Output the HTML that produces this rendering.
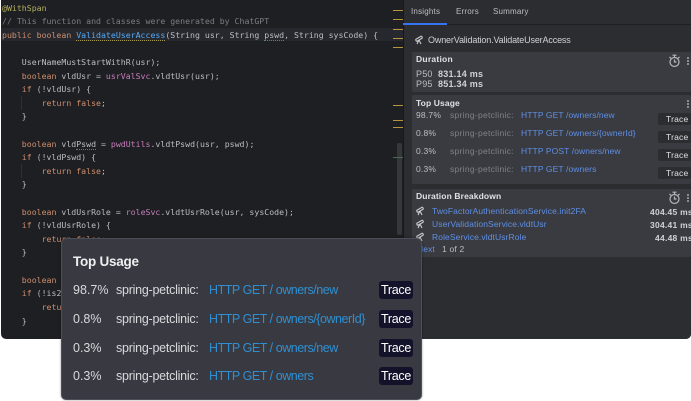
<!DOCTYPE html>
<html><head><meta charset="utf-8"><style>
html,body{margin:0;padding:0;background:#fff}
body{position:relative;width:691px;height:401px;overflow:hidden;font-family:"Liberation Sans",sans-serif}
#win{position:absolute;left:1px;top:0;width:690px;height:339px;background:#1e1f22;border-radius:0 0 5px 5px;overflow:hidden;filter:blur(.35px)}
.c{position:absolute;left:1px;font:8.22px/13px "DejaVu Sans Mono",monospace;color:#bcbec4;white-space:pre}
.k{color:#cf8e6d}.f{color:#c77dbb}
.a{position:absolute;white-space:nowrap;line-height:12px}
.b{position:absolute}
.card{position:absolute;left:412px;width:279px;background:#393b40;border-radius:2px}
.t{font-size:8.5px;color:#dfe1e5;font-weight:bold;letter-spacing:.12px}
.n{font-size:8.5px;color:#bcbec4;letter-spacing:.2px}
.g{font-size:8.5px;color:#7f828a;letter-spacing:.28px}
.l{font-size:8.5px;color:#5f8fe6;letter-spacing:.1px}
.tr{position:absolute;left:658px;width:33px;height:12px;background:#2b2d30;border-radius:2px;color:#dfe1e5;font-size:8.5px;line-height:12px;padding-left:8px;box-sizing:border-box;letter-spacing:.2px}
.y{position:absolute;left:392px;width:10px;height:1px;background:#b8963e}
#pop{position:absolute;left:61px;top:238px;width:361px;height:162px;background:#393a41;border:1px solid #4c4f59;border-radius:5px;box-sizing:border-box;box-shadow:0 0 2px rgba(0,0,0,.4);filter:blur(.2px)}
.p{position:absolute;font-size:12.5px;line-height:16px;color:#d8d9dc;white-space:nowrap}
.s{letter-spacing:-.25px}
.pl{color:#2f8fd2;letter-spacing:-.46px}
.pt{position:absolute;left:317px;width:34px;height:18px;background:#13122b;border-radius:3px;color:#fff;font-size:12.5px;line-height:19px;text-align:center;letter-spacing:-.3px}
</style></head><body>
<div id="win">
<div class="b" style="left:0;top:28px;width:402px;height:13px;background:#26282e"></div>
<div class="c" style="top:2px;color:#b3ae60">@WithSpan</div>
<div class="c" style="top:15px;color:#7a7e85">// This function and classes were generated by ChatGPT</div>
<div class="c" style="top:29px"><span class="k">public boolean</span> <span style="color:#56a8f5;border-bottom:1px dotted #a89a4a">ValidateUserAccess</span>(String usr, String <span style="border-bottom:1px dotted #5a8a5a">pswd</span>, String sysCode) {</div>
<div class="c" style="top:56px">    UserNameMustStartWithR(usr);</div>
<div class="c" style="top:70px">    <span class="k">boolean</span> vldUsr = <span class="f">usrValSvc</span>.vldtUsr(usr);</div>
<div class="c" style="top:83px">    <span class="k">if</span> (!vldUsr) {</div>
<div class="c" style="top:97px">        <span class="k">return false</span>;</div>
<div class="c" style="top:110px">    }</div>
<div class="c" style="top:138px">    <span class="k">boolean</span> vld<span style="border-bottom:1px dotted #5a8a5a">Pswd</span> = <span class="f">pwdUtils</span>.vldtPswd(usr, pswd);</div>
<div class="c" style="top:151px">    <span class="k">if</span> (!vldPswd) {</div>
<div class="c" style="top:165px">        <span class="k">return false</span>;</div>
<div class="c" style="top:178px">    }</div>
<div class="c" style="top:206px">    <span class="k">boolean</span> vldUsrRole = <span class="f">roleSvc</span>.vldtUsrRole(usr, sysCode);</div>
<div class="c" style="top:219px">    <span class="k">if</span> (!vldUsrRole) {</div>
<div class="c" style="top:233px">        <span class="k">return false</span>;</div>
<div class="c" style="top:246px">    }</div>
<div class="c" style="top:274px">    <span class="k">boolean</span> is2FA = true;</div>
<div class="c" style="top:287px">    <span class="k">if</span> (!is2FA) {</div>
<div class="c" style="top:301px">        <span class="k">return false</span>;</div>
<div class="c" style="top:315px">    }</div>
<div class="b" style="left:20px;top:96px;width:1px;height:14px;background:#2e3035"></div>
<div class="b" style="left:20px;top:164px;width:1px;height:14px;background:#2e3035"></div>
<div class="b" style="left:396px;top:143px;width:5px;height:92px;background:#35373b;border-radius:2px"></div>
<div class="y" style="top:10px"></div><div class="y" style="top:19px"></div><div class="y" style="top:29px"></div><div class="y" style="top:38px"></div><div class="y" style="top:47px"></div><div class="y" style="top:105px"></div><div class="y" style="top:120px"></div><div class="y" style="top:127px"></div>
<div class="y" style="top:157px;background:#4a6a55"></div>
<div class="b" style="left:402px;top:0;width:288px;height:339px;background:#2b2d30;border-left:1px solid #17181a;box-sizing:border-box"></div>
</div>

<div id="right" style="position:absolute;left:0;top:0;width:691px;height:339px;overflow:hidden;filter:blur(.3px)">
<div class="b" style="left:403px;top:24px;width:288px;height:1px;background:#1e1f22"></div>
<div class="b" style="left:403px;top:23px;width:44px;height:2px;background:#3574f0"></div>
<div class="a n" style="left:411px;top:6px;font-size:8px">Insights</div>
<div class="a n" style="left:456px;top:6px;font-size:8px">Errors</div>
<div class="a n" style="left:493px;top:6px;font-size:8px">Summary</div>
<svg class="b" style="left:414px;top:35px" width="10" height="10" viewBox="0 0 10 10" fill="none" stroke="#c8cad0" stroke-width="1.1"><path d="M1.5 4.5L7.5 1M2.5 6.5L8.5 3M1.5 4.5L2.5 6.5M7.5 1L8.5 3M5 5L3 9M5 5L7 9"/></svg>
<div class="a" style="left:428px;top:34px;font-size:9px;color:#cfd1d6;letter-spacing:-.15px">OwnerValidation.ValidateUserAccess</div>

<div class="card" style="top:52px;height:40px"></div>
<div class="a t" style="left:416px;top:53px;letter-spacing:.25px">Duration</div>
<div class="a n" style="left:416px;top:68px;font-size:9px">P50</div><div class="a t" style="left:438px;top:68px;font-size:9px;color:#cfd1d6;letter-spacing:.25px">831.14 ms</div>
<div class="a n" style="left:416px;top:78px;font-size:9px">P95</div><div class="a t" style="left:438px;top:78px;font-size:9px;color:#cfd1d6;letter-spacing:.25px">851.34 ms</div>
<svg class="b" style="left:668px;top:54px" width="13" height="14" viewBox="0 0 13 14" fill="none" stroke="#b4b6bc" stroke-width="1.2"><circle cx="6.5" cy="8" r="4.5"/><path d="M4.5 1.2H8.5M6.5 1.2V3.5M6.5 5.5V8H8.5M1.5 3L3 4.3M11.5 3L10 4.3"/></svg>
<div class="b" style="left:687px;top:57px;width:2px;height:2px;background:#8a8c92;box-shadow:0 3px #8a8c92,0 6px #8a8c92"></div>

<div class="card" style="top:95px;height:89px"></div>
<div class="a t" style="left:416px;top:97px">Top Usage</div>
<div class="b" style="left:687px;top:100px;width:2px;height:2px;background:#8a8c92;box-shadow:0 3px #8a8c92,0 6px #8a8c92"></div>
<div class="a n" style="left:416px;top:109px">98.7%</div><div class="a g" style="left:450px;top:109px">spring-petclinic:</div><div class="a l" style="left:521px;top:109px">HTTP GET /owners/new</div>
<div class="a n" style="left:416px;top:127px">0.8%</div><div class="a g" style="left:450px;top:127px">spring-petclinic:</div><div class="a l" style="left:521px;top:127px">HTTP GET /owners/{ownerId}</div>
<div class="a n" style="left:416px;top:145px">0.3%</div><div class="a g" style="left:450px;top:145px">spring-petclinic:</div><div class="a l" style="left:521px;top:145px">HTTP POST /owners/new</div>
<div class="a n" style="left:416px;top:163px">0.3%</div><div class="a g" style="left:450px;top:163px">spring-petclinic:</div><div class="a l" style="left:521px;top:163px">HTTP GET /owners</div>
<div class="tr" style="top:113px">Trace</div><div class="tr" style="top:131px">Trace</div><div class="tr" style="top:149px">Trace</div><div class="tr" style="top:167px">Trace</div>

<div class="card" style="top:189px;height:68px"></div>
<div class="a t" style="left:416px;top:190px">Duration Breakdown</div>
<svg class="b" style="left:668px;top:191px" width="13" height="14" viewBox="0 0 13 14" fill="none" stroke="#b4b6bc" stroke-width="1.2"><circle cx="6.5" cy="8" r="4.5"/><path d="M4.5 1.2H8.5M6.5 1.2V3.5M6.5 5.5V8H8.5M1.5 3L3 4.3M11.5 3L10 4.3"/></svg>
<div class="b" style="left:687px;top:194px;width:2px;height:2px;background:#8a8c92;box-shadow:0 3px #8a8c92,0 6px #8a8c92"></div>
<svg class="b" style="left:415px;top:206px" width="10" height="10" viewBox="0 0 10 10" fill="none" stroke="#c8cad0" stroke-width="1.1"><path d="M1.5 4.5L7.5 1M2.5 6.5L8.5 3M1.5 4.5L2.5 6.5M7.5 1L8.5 3M5 5L3 9M5 5L7 9"/></svg>
<svg class="b" style="left:415px;top:219px" width="10" height="10" viewBox="0 0 10 10" fill="none" stroke="#c8cad0" stroke-width="1.1"><path d="M1.5 4.5L7.5 1M2.5 6.5L8.5 3M1.5 4.5L2.5 6.5M7.5 1L8.5 3M5 5L3 9M5 5L7 9"/></svg>
<svg class="b" style="left:415px;top:232px" width="10" height="10" viewBox="0 0 10 10" fill="none" stroke="#c8cad0" stroke-width="1.1"><path d="M1.5 4.5L7.5 1M2.5 6.5L8.5 3M1.5 4.5L2.5 6.5M7.5 1L8.5 3M5 5L3 9M5 5L7 9"/></svg>
<div class="a l" style="left:432px;top:205px">TwoFactorAuthenticationService.init2FA</div>
<div class="a l" style="left:432px;top:218px">UserValidationService.vldtUsr</div>
<div class="a l" style="left:432px;top:231px">RoleService.vldtUsrRole</div>
<div class="a t" style="left:650px;top:206px;color:#cfd1d6;letter-spacing:.25px">404.45 ms</div>
<div class="a t" style="left:650px;top:219px;color:#cfd1d6;letter-spacing:.25px">304.41 ms</div>
<div class="a t" style="left:655px;top:232px;color:#cfd1d6;letter-spacing:.25px">44.48 ms</div>
<div class="a l" style="left:417px;top:243px">Next</div>
<div class="a n" style="left:442px;top:243px">1 of 2</div>
</div>

<div id="pop">
<div class="p" style="left:11px;top:14px;font-size:13.5px;font-weight:bold;line-height:18px;color:#eeeff1;letter-spacing:-.25px">Top Usage</div>
<div class="p" style="left:11px;top:43px">98.7%</div><div class="p s" style="left:54px;top:43px">spring-petclinic:</div><div class="p pl" style="left:147px;top:43px">HTTP GET / owners/new</div><div class="pt" style="top:42px">Trace</div>
<div class="p" style="left:11px;top:72px">0.8%</div><div class="p s" style="left:54px;top:72px">spring-petclinic:</div><div class="p pl" style="left:147px;top:72px">HTTP GET / owners/{ownerId}</div><div class="pt" style="top:71px">Trace</div>
<div class="p" style="left:11px;top:101px">0.3%</div><div class="p s" style="left:54px;top:101px">spring-petclinic:</div><div class="p pl" style="left:147px;top:101px">HTTP GET / owners/new</div><div class="pt" style="top:100px">Trace</div>
<div class="p" style="left:11px;top:129px">0.3%</div><div class="p s" style="left:54px;top:129px">spring-petclinic:</div><div class="p pl" style="left:147px;top:129px">HTTP GET / owners</div><div class="pt" style="top:128px">Trace</div>
</div>
</body></html>
